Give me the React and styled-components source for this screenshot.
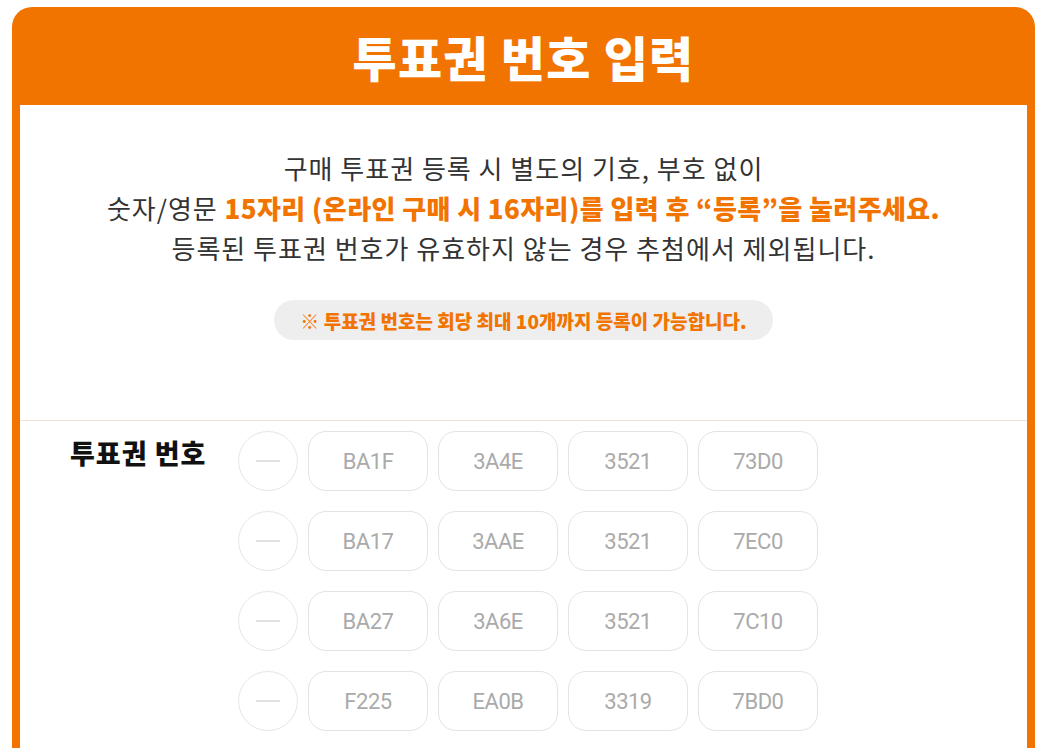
import React from 'react';
import styled, { createGlobalStyle } from 'styled-components';

const GlobalStyle = createGlobalStyle`
  html, body {
    margin: 0;
    padding: 0;
    background: #fff;
  }

  body {
    font-family: 'Noto Sans CJK KR', 'Noto Sans', sans-serif;
    color: #333;
  }
`;

const ORANGE = '#f27400';

const StyledPanel = styled.section`
  margin: 7px 12px 0;
  width: 1023px;
  background: ${ORANGE};
  border-radius: 20px 20px 0 0;
  padding: 0 8px 0 8px;
  box-sizing: border-box;
  min-height: 760px;
  display: flex;
  flex-direction: column;
`;

const Title = styled.h1`
  margin: 0;
  height: 98px;
  display: flex;
  align-items: center;
  justify-content: center;
  color: #fff;
  font-size: 48px;
  font-weight: 900;
  letter-spacing: 1.2px;
`;

const Body = styled.div`
  flex: 1;
  background: #fff;
`;

const Guide = styled.div`
  display: flex;
  flex-direction: column;
  align-items: center;
  padding: 43px 0 80px;
  border-bottom: 1px solid #f4e2cf;

  p {
    margin: 0;
    font-size: 26px;
    line-height: 40px;
    letter-spacing: 1px;
    text-align: center;
    color: #333;
  }

  strong {
    color: ${ORANGE};
    font-weight: 900;
    letter-spacing: 0.4px;
  }
`;

const Notice = styled.div`
  margin-top: 32px;
  height: 40px;
  padding: 0 26px;
  display: flex;
  align-items: center;
  border-radius: 20px;
  background: #eeeeee;
  color: ${ORANGE};
  font-size: 19px;
  font-weight: 900;
  letter-spacing: 0;
`;

const Form = styled.div`
  display: flex;
  padding: 10px 0 40px 50px;
`;

const Label = styled.div`
  width: 168px;
  padding-top: 4px;
  font-size: 27px;
  font-weight: 900;
  color: #111;
  letter-spacing: 1px;
  line-height: 36px;
`;

const Rows = styled.div`
  display: flex;
  flex-direction: column;
  gap: 20px;
`;

const Row = styled.div`
  display: flex;
  gap: 10px;
`;

const RemoveButton = styled.button`
  width: 60px;
  height: 60px;
  border: 1px solid #e6e6e6;
  border-radius: 50%;
  background: #fff;
  display: flex;
  align-items: center;
  justify-content: center;
  padding: 0;

  &::before {
    content: '';
    width: 24px;
    height: 2px;
    background: #e2e2e2;
  }
`;

const CodeBox = styled.div`
  width: 120px;
  height: 60px;
  box-sizing: border-box;
  border: 1px solid #e3e3e3;
  border-radius: 18px;
  display: flex;
  align-items: center;
  justify-content: center;
  font-family: Roboto, 'Liberation Sans', sans-serif;
  font-size: 22px;
  color: #aaa;
  letter-spacing: -0.5px;
`;

const tickets = [
  ['BA1F', '3A4E', '3521', '73D0'],
  ['BA17', '3AAE', '3521', '7EC0'],
  ['BA27', '3A6E', '3521', '7C10'],
  ['F225', 'EA0B', '3319', '7BD0'],
];

const App = () => (
  <>
    <GlobalStyle />
    <StyledPanel>
      <Title>투표권 번호 입력</Title>
      <Body>
        <Guide>
          <p>구매 투표권 등록 시 별도의 기호, 부호 없이</p>
          <p>
            숫자/영문 <strong>15자리 (온라인 구매 시 16자리)를 입력 후 “등록”을 눌러주세요.</strong>
          </p>
          <p>등록된 투표권 번호가 유효하지 않는 경우 추첨에서 제외됩니다.</p>
          <Notice>※ 투표권 번호는 회당 최대 10개까지 등록이 가능합니다.</Notice>
        </Guide>
        <Form>
          <Label>투표권 번호</Label>
          <Rows>
            {tickets.map((codes, i) => (
              <Row key={i}>
                <RemoveButton type="button" aria-label="삭제" />
                {codes.map((code, j) => (
                  <CodeBox key={j}>{code}</CodeBox>
                ))}
              </Row>
            ))}
          </Rows>
        </Form>
      </Body>
    </StyledPanel>
  </>
);

export default App;
